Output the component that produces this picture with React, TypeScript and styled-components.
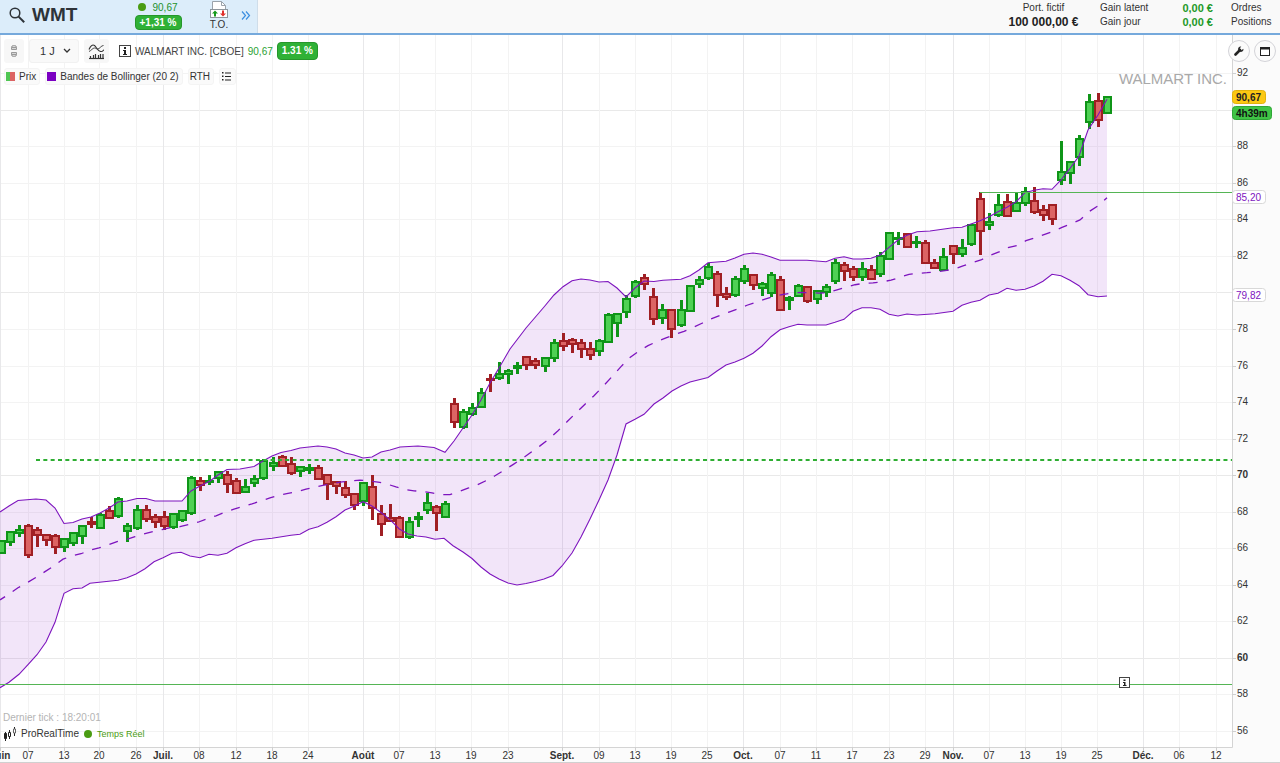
import React from "react";
import styled, { createGlobalStyle } from "styled-components";

const GlobalStyle = createGlobalStyle`
  * { box-sizing: border-box; }
  body {
    margin: 0;
    background: #fff;
    color: #333;
    font-family: "Liberation Sans", Arial, sans-serif;
    font-size: 10px;
  }
  button, select { font: inherit; color: inherit; }
`;

/* ---------- chart data ---------- */

const STEP = 9.067;
const PLOT_RIGHT = 1232;
const PLOT_BOTTOM = 747;

type Candle = ["g" | "r", number, number, number, number];

// direction, high, body top, body bottom, low
const candles: Candle[] = [
  ["g", 540, 540, 554, 554], ["g", 531, 531, 543, 546], ["g", 525, 529, 534, 537], ["r", 524, 525, 556, 558],
  ["r", 527, 529, 536, 547], ["r", 534, 534, 541, 546], ["r", 534, 535, 548, 554], ["g", 538, 538, 548, 552],
  ["g", 532, 532, 544, 546], ["g", 525, 525, 537, 544], ["r", 517, 521, 525, 528], ["g", 513, 514, 529, 529],
  ["r", 506, 510, 519, 519], ["g", 497, 498, 517, 518], ["g", 523, 525, 532, 542], ["g", 505, 509, 529, 530],
  ["r", 505, 509, 520, 522], ["r", 514, 516, 523, 528], ["r", 511, 516, 527, 530], ["g", 513, 513, 528, 529],
  ["g", 510, 510, 521, 522], ["g", 476, 477, 514, 515], ["r", 477, 480, 486, 491], ["g", 475, 480, 483, 485],
  ["g", 471, 471, 479, 483], ["r", 471, 474, 485, 493], ["r", 478, 480, 494, 494], ["g", 479, 486, 493, 493],
  ["g", 475, 478, 484, 487], ["g", 459, 460, 479, 480], ["g", 457, 462, 467, 471], ["r", 455, 456, 467, 467],
  ["r", 457, 463, 474, 475], ["g", 466, 466, 472, 477], ["g", 464, 467, 471, 474], ["r", 465, 467, 480, 480],
  ["r", 474, 474, 485, 500], ["r", 481, 481, 487, 494], ["r", 481, 487, 496, 498], ["r", 493, 493, 506, 510],
  ["g", 482, 482, 502, 506], ["r", 475, 486, 509, 520], ["r", 505, 513, 525, 536], ["r", 504, 517, 522, 522],
  ["r", 516, 517, 538, 538], ["g", 517, 521, 538, 539], ["g", 512, 516, 520, 527], ["g", 493, 502, 511, 514],
  ["r", 505, 506, 514, 531], ["g", 501, 503, 518, 518], ["r", 398, 403, 423, 428], ["g", 409, 411, 428, 429],
  ["g", 403, 407, 415, 416], ["g", 388, 392, 408, 408], ["r", 374, 378, 381, 392], ["g", 362, 373, 379, 380],
  ["g", 369, 370, 375, 384], ["g", 362, 365, 369, 374], ["r", 356, 356, 366, 370], ["r", 358, 360, 366, 369],
  ["g", 357, 357, 367, 372], ["g", 339, 342, 359, 362], ["r", 333, 340, 347, 351], ["r", 338, 339, 345, 353],
  ["r", 339, 342, 350, 358], ["r", 342, 348, 356, 360], ["g", 339, 340, 352, 356], ["g", 313, 314, 343, 343],
  ["g", 313, 313, 324, 337], ["g", 295, 298, 313, 318], ["g", 280, 281, 297, 298], ["r", 274, 277, 285, 290],
  ["r", 288, 296, 320, 325], ["g", 304, 309, 319, 324], ["r", 309, 309, 330, 338], ["g", 300, 309, 326, 327],
  ["g", 285, 285, 312, 312], ["g", 276, 279, 285, 288], ["g", 263, 266, 279, 280], ["r", 271, 273, 296, 307],
  ["r", 287, 293, 298, 300], ["g", 276, 278, 296, 297], ["g", 265, 268, 282, 284], ["r", 274, 274, 286, 290],
  ["g", 282, 283, 289, 296], ["g", 272, 274, 294, 297], ["r", 276, 279, 311, 311], ["g", 296, 297, 301, 310],
  ["g", 284, 285, 297, 297], ["r", 286, 286, 302, 303], ["g", 290, 290, 300, 304], ["g", 284, 286, 293, 297],
  ["g", 259, 262, 282, 284], ["r", 262, 264, 272, 281], ["r", 266, 268, 278, 281], ["g", 262, 268, 278, 281],
  ["r", 265, 269, 280, 280], ["g", 252, 255, 275, 277], ["g", 232, 232, 260, 260], ["g", 232, 237, 240, 245],
  ["r", 233, 233, 248, 248], ["g", 236, 241, 244, 248], ["r", 240, 242, 264, 264], ["r", 259, 262, 269, 269],
  ["g", 248, 256, 271, 271], ["r", 245, 245, 255, 264], ["g", 239, 247, 255, 257], ["g", 224, 224, 245, 246],
  ["r", 192, 198, 232, 255], ["g", 213, 221, 226, 230], ["g", 194, 204, 216, 217], ["r", 194, 201, 217, 217],
  ["g", 193, 202, 212, 212], ["g", 187, 191, 204, 206], ["r", 187, 200, 213, 214], ["r", 205, 209, 216, 221],
  ["r", 204, 204, 220, 225], ["g", 141, 171, 181, 185], ["g", 161, 161, 174, 184], ["g", 135, 138, 158, 166],
  ["g", 94, 101, 123, 129], ["r", 93, 100, 121, 127], ["g", 96, 96, 114, 114],
];

type Point = [number, number];

const upperBand: Point[] = [
  [0, 512], [9, 506], [18, 500.5], [36, 499], [46, 500], [55, 508], [64, 523.5], [73, 522.5], [82, 519], [91, 517],
  [100, 513], [109, 508], [118, 502], [127, 501], [137, 498.5], [146, 498.5], [155, 501], [182, 501], [191, 491],
  [200, 486], [210, 481], [218, 475], [227, 469.5], [240, 469], [254, 466.5], [263, 461], [272, 456], [281, 452.5],
  [291, 450.5], [300, 448], [318, 446], [327, 447], [336, 449], [345, 453], [354, 455], [363, 458], [372, 457],
  [381, 452], [390, 450], [400, 447], [418, 446], [434, 447.5], [445, 452.3], [454, 441], [463, 428], [472, 415],
  [481, 400], [490, 383], [499, 368], [510, 349], [526, 328], [544, 307], [554, 295], [563, 286.7], [572, 280.7],
  [581, 279], [590, 280], [599, 282], [608, 281.5], [617, 288], [626, 297], [635, 288], [644, 281], [654, 281.5],
  [663, 280.3], [681, 279.3], [690, 275.7], [699, 270], [708, 262.7], [726, 261.3], [735, 258], [744, 254.3],
  [753, 253], [762, 254.3], [771, 257], [780, 260.3], [807, 260.3], [826, 261.7], [835, 258.3], [844, 256.7],
  [853, 259], [862, 259], [871, 258.3], [880, 255], [889, 247.3], [898, 240], [907, 235.3], [917, 231.7], [930, 231],
  [953, 227.7], [962, 227.3], [971, 224], [980, 220.7], [989, 216.7], [998, 211.7], [1007, 207.3], [1016, 201.7],
  [1025, 192.7], [1034, 190.3], [1043, 188.7], [1052, 189.3], [1061, 180], [1070, 168.3], [1079, 156], [1088, 130],
  [1098, 115], [1107, 99.3],
];

const lowerBand: Point[] = [
  [0, 687.7], [9, 682.3], [19, 674.3], [28, 664.7], [37, 654.7], [46, 642], [55, 622.3], [64, 593.3], [73, 588.7],
  [82, 588], [90, 583.3], [118, 580.3], [127, 577.7], [136, 574], [145, 568.7], [154, 561.7], [163, 557.7],
  [172, 553.3], [181, 552.3], [190, 556], [200, 557.7], [209, 554.3], [218, 555.3], [227, 553.3], [236, 547.7],
  [245, 543.7], [254, 540.3], [272, 538.3], [291, 535.3], [300, 534.3], [309, 529.3], [318, 526.7], [327, 522.3],
  [336, 516.7], [345, 510], [354, 506.3], [363, 501.7], [372, 506], [382, 513.3], [391, 520.7], [399, 528.7],
  [408, 534], [417, 536], [426, 537], [435, 539.3], [444, 538.3], [453, 545.7], [463, 552], [472, 558.5], [481, 567],
  [490, 574], [499, 579], [508, 583], [517, 585], [526, 583.5], [535, 581.5], [544, 579], [553, 575.5], [562, 566],
  [572, 553], [581, 537], [590, 519], [599, 500], [608, 480], [617, 455], [626, 424], [635, 419.3], [644, 414.3],
  [654, 404], [663, 398], [672, 391], [681, 386], [690, 382], [708, 377.5], [717, 371], [726, 365], [735, 362],
  [744, 358.3], [753, 353.3], [762, 346], [771, 336.7], [780, 329.7], [789, 326.7], [798, 324.3], [807, 325],
  [826, 325], [835, 322.3], [844, 319.3], [853, 311.3], [862, 307.7], [871, 307.7], [880, 309.3], [889, 314.3],
  [898, 316], [907, 314], [917, 315], [935, 313.7], [953, 311.3], [962, 305.3], [971, 302.3], [980, 300.3],
  [989, 295], [998, 293.3], [1007, 288.3], [1016, 290.3], [1025, 289.3], [1034, 286], [1043, 281.3], [1052, 274.3],
  [1061, 275.7], [1070, 280.3], [1079, 285.7], [1088, 294.7], [1098, 296.7], [1107, 296],
];

const valueAt = (line: Point[], x: number) => {
  const next = Math.max(1, line.findIndex((p) => p[0] >= x));
  const [x0, y0] = line[next - 1];
  const [x1, y1] = line[next];
  return y0 + ((y1 - y0) * (x - x0)) / (x1 - x0);
};

// the moving average runs halfway between the two bands
const average: Point[] = Array.from({ length: 124 }, (_, i) => {
  const x = i * 9;
  return [x, (valueAt(upperBand, x) + valueAt(lowerBand, x)) / 2] as Point;
}).filter((p) => p[0] <= 1107);

const toPoints = (line: Point[]) => line.map((p) => p.join(",")).join(" ");

const prices = Array.from({ length: 19 }, (_, i) => ({
  value: 92 - i * 2,
  y: Math.round(73.2 + i * 36.54),
}));

const dates: [string, number][] = [
  ["Juin", 0], ["07", 28], ["13", 64], ["20", 99], ["26", 136], ["Juil.", 163], ["08", 199], ["12", 236],
  ["18", 272], ["24", 308], ["Août", 363], ["07", 399], ["13", 435], ["19", 471], ["23", 508], ["Sept.", 562],
  ["09", 599], ["13", 635], ["19", 671], ["25", 707], ["Oct.", 743], ["07", 780], ["11", 816], ["17", 852],
  ["23", 889], ["29", 925], ["Nov.", 953], ["07", 989], ["13", 1025], ["19", 1061], ["25", 1097], ["Déc.", 1143],
  ["06", 1179], ["12", 1216],
];

const isMonth = (label: string) => /[A-Z]/.test(label);

/* ---------- header ---------- */

const Header = styled.header`
  display: flex;
  justify-content: space-between;
  height: 35px;
  background: #f9f9f9;
  border-bottom: 2px solid #75a9dc;
`;

const SymbolPanel = styled.div`
  display: flex;
  align-items: center;
  width: 258px;
  padding: 0 0 3px 8px;
  background: #dcedfa;
  border-right: 1px solid #cfdde9;
`;

const SymbolButton = styled.button`
  display: flex;
  align-items: center;
  gap: 6px;
  width: 127px;
  padding: 0;
  border: 0;
  background: none;
  color: #2d3338;
  font-size: 19px;
  font-weight: bold;
  line-height: 24px;
`;

const Quote = styled.div`
  display: flex;
  flex-direction: column;
  align-items: center;
  gap: 1px;
  width: 46px;
`;

const QuoteValue = styled.span`
  display: flex;
  align-items: center;
  gap: 6px;
  color: #23912b;
  line-height: 13px;
`;

const Dot = styled.i`
  width: 8px;
  height: 8px;
  border-radius: 50%;
  background: #4a9c12;
`;

const Badge = styled.span<{ $tall?: boolean }>`
  padding: 0 4px;
  border: 1px solid #26962b;
  border-radius: 4px;
  background: #2fb136;
  color: #fff;
  font-weight: bold;
  line-height: ${(p) => (p.$tall ? 16 : 13)}px;
  white-space: nowrap;
`;

const OrderButton = styled.button`
  display: flex;
  flex-direction: column;
  align-items: center;
  width: 20px;
  margin-left: 28px;
  padding: 0;
  border: 0;
  background: none;
  line-height: 11px;
`;

const MoreButton = styled.button`
  display: flex;
  margin-left: 12px;
  padding: 0;
  border: 0;
  background: none;
`;

const Account = styled.div`
  display: flex;
  padding: 0 8px 4px 0;
`;

const AccountColumn = styled.div<{ $width: number; $align?: string }>`
  display: flex;
  flex-direction: column;
  align-items: ${(p) => p.$align ?? "flex-start"};
  justify-content: center;
  width: ${(p) => p.$width}px;
  line-height: 14px;
  white-space: nowrap;
`;

const Balance = styled.strong`
  color: #222;
  font-size: 12px;
`;

const Gain = styled.strong`
  color: #1f9a28;
  font-size: 11px;
`;

const AccountLink = styled.a`
  color: inherit;
  text-decoration: none;
`;

/* ---------- chart panel ---------- */

const ChartPanel = styled.main`
  position: relative;
`;

const ChartSvg = styled.svg`
  display: block;
  width: 100%;
  height: auto;
  fill: #333;
`;

const TopTools = styled.div`
  position: absolute;
  top: 4px;
  left: 4px;
  display: flex;
  flex-direction: column;
  gap: 5px;
`;

const ToolRow = styled.div`
  display: flex;
  align-items: center;
  gap: 5px;
`;

const Tool = styled.button`
  display: flex;
  align-items: center;
  justify-content: center;
  width: 20px;
  height: 24px;
  padding: 0;
  border: 0;
  border-radius: 3px;
  background: #f7f7f7;
`;

const WideTool = styled(Tool)`
  width: 25px;
`;

const PeriodBox = styled.label`
  display: flex;
  align-items: center;
  width: 50px;
  height: 24px;
  padding-left: 10px;
  border: 1px solid #f1f1f1;
  border-radius: 3px;
  background: #f9f9f9;
`;

const PeriodSelect = styled.select`
  width: 23px;
  padding: 0;
  border: 0;
  outline: 0;
  background: none;
  appearance: none;
  font-size: 11px;
`;

const Title = styled.div`
  display: flex;
  align-items: center;
  gap: 4px;
  margin-left: 5px;
  color: #444;
  white-space: nowrap;
`;

const TitlePrice = styled.span`
  color: #2aa132;
`;

const ChipRow = styled(ToolRow)``;

const Chip = styled.button`
  display: flex;
  align-items: center;
  gap: 4px;
  height: 17px;
  padding: 0 3px 0 1px;
  border: 1px solid #f4f4f4;
  border-radius: 3px;
  background: #fafafa;
  color: #333;
  white-space: nowrap;
`;

const Swatch = styled.i<{ $fill: string }>`
  width: 9px;
  height: 9px;
  background: ${(p) => p.$fill};
`;

const CornerTools = styled.div`
  position: absolute;
  top: 5px;
  right: 4px;
  display: flex;
  gap: 4px;
`;

const RoundButton = styled.button`
  display: flex;
  align-items: center;
  justify-content: center;
  width: 22px;
  height: 22px;
  padding: 0;
  border: 1px solid #d3d3d8;
  border-radius: 50%;
  background: #fbfbfb;
`;

const Status = styled.footer`
  position: absolute;
  bottom: 22px;
  left: 3px;
  display: flex;
  flex-direction: column;
  gap: 2px;
`;

const LastTick = styled.span`
  color: #b4b4b4;
  line-height: 14px;
`;

const Provider = styled.div`
  display: flex;
  align-items: center;
  gap: 4px;
  line-height: 14px;
`;

const Live = styled.span`
  display: flex;
  align-items: center;
  gap: 5px;
  padding-left: 1px;
  color: #4a9c12;
  font-size: 9px;
`;

/* ---------- icons ---------- */

const SearchIcon = () => (
  <svg width="18" height="18" viewBox="0 0 18 18" fill="none" stroke="#2d3338">
    <circle cx="7" cy="7" r="4.8" strokeWidth="1.5" />
    <path d="M10.6 10.6 16.2 16.2" strokeWidth="2" />
  </svg>
);

const TicketIcon = () => (
  <svg width="20" height="19" viewBox="0 0 20 19">
    <path d="M3.5 9V1.5h9l4 4V9" fill="#fff" stroke="#9aa3ab" />
    <path d="M12.5 1.5v4h4" fill="none" stroke="#9aa3ab" />
    <rect x="1.5" y="9.5" width="17" height="8" fill="#fff" stroke="#8d969d" />
    <path d="M6 10.500 9 13.500H7v3H5v-3H3z" fill="#149a1b" />
    <path d="M14 16.500 11 13.500h2v-3h2v3h2z" fill="#e0302c" />
  </svg>
);

const InfoIcon = () => (
  <svg width="12" height="12" viewBox="0 0 12 12">
    <rect x="0.5" y="0.5" width="11" height="11" fill="#fff" stroke="#444" />
    <path d="M5 2h2v2H5zM4 5h3v4h1v1H4V9h1V6H4z" fill="#222" />
  </svg>
);

const IndicatorIcon = () => (
  <svg width="17" height="17" viewBox="0 0 17 17" fill="none" stroke="#333">
    <path d="M1 6.500C2.500 3 4.500 1 6.500 2.500S9.500 8 12.500 8.500s2-1.500 3.500-1.500" strokeWidth="1.1" />
    <path d="M1 8.500c2.500-1 3.500-3.500 5.500-3.500S9 7 11 5.500 13 3 15.500 2.500" strokeWidth="0.9" />
    <path d="M1 15.500h15" strokeWidth="1.2" />
    <path d="M2.500 15v-2M5.500 15v-3M7.500 15v-4M10.500 15v-3M12.500 15v-4M15 15v-4" strokeWidth="1.2" />
  </svg>
);

const LinkIcon = () => (
  <svg width="8" height="14" viewBox="0 0 8 14" fill="#d6d6d6" stroke="#999">
    <path d="M1.500 5.500V3.500a2 2 0 0 1 2-2h1a2 2 0 0 1 2 2v2zM1.500 3.500h5" />
    <path d="M1.500 8.500v2a2 2 0 0 0 2 2h1a2 2 0 0 0 2-2v-2zM1.500 10.500h5" />
  </svg>
);

const CandlesIcon = () => (
  <svg width="14" height="14" viewBox="0 0 14 14" stroke="#222" fill="#222">
    <path d="M2.500 5v9M6.500 3v9M11.500 0v9" />
    <path d="M1.500 6.500h2v5h-2z" />
    <path d="M5.500 5.500h2v4h-2z" fill="#fff" />
    <path d="M10.500 2h2v4h-2z" fill="#fff" stroke="#666" />
  </svg>
);

/* ---------- chart drawing ---------- */

const CandleShape = ({ index, data }: { index: number; data: Candle }) => {
  const [kind, high, top, bottom, low] = data;
  const x = Math.round(0.5 + index * STEP);
  const edge = kind === "g" ? "#0f9518" : "#a01f24";
  const core = kind === "g" ? "#4fd154" : "#dc6464";
  return (
    <g shapeRendering="crispEdges">
      <rect x={x - 1} y={high} width={3} height={low - high} fill={edge} />
      <rect x={x - 4} y={top} width={9} height={bottom - top} fill={edge} />
      {bottom - top > 4 && <rect x={x - 2} y={top + 2} width={5} height={bottom - top - 4} fill={core} />}
    </g>
  );
};

type TagProps = { y: number; width: number; text: string; fill: string; stroke: string; color: string; bold?: boolean };

const PriceTag = ({ y, width, text, fill, stroke, color, bold }: TagProps) => (
  <g>
    <rect x="1232.5" y={y - 6.5} width={width} height="13" rx="3" fill={fill} stroke={stroke} />
    <text x="1236" y={y + 4} fill={color} fontSize="10" fontWeight={bold ? "bold" : "normal"}>
      {text}
    </text>
  </g>
);

const Chart = () => (
  <ChartSvg viewBox="0 35 1280 728" role="img" aria-label="WALMART INC. - Prix et Bandes de Bollinger">
    <rect x="0" y="35" width="1280" height="728" fill="#fbfbfb" />
    <rect x="0" y="35" width={PLOT_RIGHT} height={PLOT_BOTTOM - 35} fill="#fff" />

    <g shapeRendering="crispEdges">
      {prices.map(({ value, y }) => (
        <rect key={value} x="0" y={y} width={PLOT_RIGHT} height="1" fill={value % 10 ? "#f3f3f3" : "#e9e9e9"} />
      ))}
      {dates.map(([label, x]) => (
        <rect key={x} x={x} y="35" width="1" height={PLOT_BOTTOM - 35} fill={isMonth(label) ? "#e8e8ea" : "#f3f3f3"} />
      ))}
    </g>

    <text x="1227" y="84" textAnchor="end" fontSize="15" fill="#a9a9a9">
      WALMART INC.
    </text>

    <polygon points={`${toPoints(upperBand)} ${toPoints([...lowerBand].reverse())}`} fill="#7b00c2" fillOpacity="0.1" />

    {candles.map((data, i) => (
      <CandleShape key={i} index={i} data={data} />
    ))}

    <g fill="none" stroke="#7d14be" strokeWidth="1.1">
      <polyline points={toPoints(upperBand)} />
      <polyline points={toPoints(lowerBand)} />
      <polyline points={toPoints(average)} strokeWidth="1.3" strokeDasharray="9 9.12" strokeDashoffset="3" />
    </g>

    <path d="M980 192.5H1232M0 684.5H1232" stroke="#55b555" />
    <path d="M36 460H1232" stroke="#2fae33" strokeWidth="2" strokeDasharray="4 3.33" />

    <g transform="translate(1119.5 677.5)">
      <rect width="10" height="10" fill="#fff" stroke="#444" />
      <path d="M4 2h2v1.500H4zM3.500 4.500H6v3h1v1H3.500v-1h1v-2h-1z" fill="#222" />
    </g>

    <path d="M0 747.5H1232.5V35" fill="none" stroke="#d4d4d4" />
    <path d="M0 762.5H1280" stroke="#d0d0d0" />

    {prices.map(({ value, y }) =>
      value === 90 || value === 80 ? null : (
        <g key={value}>
          <path d={`M1232 ${y + 0.5}h4`} stroke="#cfcfcf" />
          <text x="1237" y={y + 3} fontSize="10" fontWeight={value % 10 ? "normal" : "bold"}>
            {value}
          </text>
        </g>
      ),
    )}
    {dates.map(([label, x]) => (
      <g key={x}>
        <path d={`M${x + 0.5} 747v4`} stroke="#cfcfcf" />
        <text x={x} y="759" textAnchor="middle" fontSize="10" fontWeight={isMonth(label) ? "bold" : "normal"}>
          {label}
        </text>
      </g>
    ))}

    <PriceTag y={97} width={33} text="90,67" fill="#fcc812" stroke="#e2b20c" color="#222" bold />
    <PriceTag y={113} width={39} text="4h39m" fill="#3fc446" stroke="#2fa636" color="#111" bold />
    <PriceTag y={197} width={33} text="85,20" fill="#fff" stroke="#d8d8d8" color="#7d14be" />
    <PriceTag y={295} width={33} text="79,82" fill="#fff" stroke="#d8d8d8" color="#7d14be" />
  </ChartSvg>
);

export default function App() {
  return (
    <>
      <GlobalStyle />
      <Header>
        <SymbolPanel>
          <SymbolButton>
            <SearchIcon />
            WMT
          </SymbolButton>
          <Quote>
            <QuoteValue>
              <Dot />
              90,67
            </QuoteValue>
            <Badge>+1,31 %</Badge>
          </Quote>
          <OrderButton>
            <TicketIcon />
            T.O.
          </OrderButton>
          <MoreButton aria-label="Plus">
            <svg width="10" height="9" viewBox="0 0 10 9" fill="none" stroke="#3d8fe0">
              <path d="M1 0.500 4.500 4.500 1 8.500M5 0.500 8.500 4.500 5 8.500" strokeWidth="1.2" />
            </svg>
          </MoreButton>
        </SymbolPanel>
        <Account>
          <AccountColumn $width={73} $align="center">
            <span>Port. fictif</span>
            <Balance>100 000,00 €</Balance>
          </AccountColumn>
          <AccountColumn $width={20} />
          <AccountColumn $width={60}>
            <span>Gain latent</span>
            <span>Gain jour</span>
          </AccountColumn>
          <AccountColumn $width={53} $align="flex-end">
            <Gain>0,00 €</Gain>
            <Gain>0,00 €</Gain>
          </AccountColumn>
          <AccountColumn $width={18} />
          <AccountColumn $width={41}>
            <AccountLink href="#ordres">Ordres</AccountLink>
            <AccountLink href="#positions">Positions</AccountLink>
          </AccountColumn>
        </Account>
      </Header>

      <ChartPanel>
        <Chart />

        <TopTools>
          <ToolRow>
            <Tool aria-label="Lier">
              <LinkIcon />
            </Tool>
            <PeriodBox>
              <PeriodSelect aria-label="Unité de temps" defaultValue="1 J">
                <option>1 J</option>
              </PeriodSelect>
              <svg width="8" height="6" viewBox="0 0 8 6" fill="none" stroke="#333">
                <path d="M1 1l3 3 3-3" strokeWidth="1.3" />
              </svg>
            </PeriodBox>
            <WideTool aria-label="Indicateurs">
              <IndicatorIcon />
            </WideTool>
            <Title>
              <InfoIcon />
              <span>WALMART INC. [CBOE]</span>
              <TitlePrice>90,67</TitlePrice>
              <Badge $tall>1.31 %</Badge>
            </Title>
          </ToolRow>
          <ChipRow>
            <Chip>
              <Swatch $fill="linear-gradient(90deg, #4fc653 50%, #dc6464 50%)" />
              Prix
            </Chip>
            <Chip>
              <Swatch $fill="#7b00c2" />
              Bandes de Bollinger (20 2)
            </Chip>
            <Chip>RTH</Chip>
            <Chip aria-label="Liste">
              <svg width="11" height="9" viewBox="0 0 11 9" fill="#222">
                <path d="M1 0h1.500v1.500H1zM1 3.500h1.500V5H1zM1 7h1.500v1.500H1zM4 0.500h6v1H4zM4 4h6v1H4zM4 7.500h6v1H4z" />
              </svg>
            </Chip>
          </ChipRow>
        </TopTools>

        <CornerTools>
          <RoundButton aria-label="Réglages">
            <svg width="10" height="10" viewBox="0 0 10 10" fill="none" stroke="#222">
              <path d="M1.500 8.500 6 4" strokeWidth="2.6" strokeLinecap="round" />
              <path d="M6.500 0.800a2.400 2.400 0 1 0 2.700 2.700L7.500 4.500 5.600 3.500 5.500 2z" fill="#222" strokeWidth="0.8" />
            </svg>
          </RoundButton>
          <RoundButton aria-label="Agrandir">
            <svg width="10" height="9" viewBox="0 0 10 9">
              <rect x="0.5" y="0.5" width="9" height="8" fill="#fff" stroke="#222" />
              <rect width="10" height="2.5" fill="#222" />
            </svg>
          </RoundButton>
        </CornerTools>

        <Status>
          <LastTick>Dernier tick : 18:20:01</LastTick>
          <Provider>
            <CandlesIcon />
            ProRealTime
            <Live>
              <Dot />
              Temps Réel
            </Live>
          </Provider>
        </Status>
      </ChartPanel>
    </>
  );
}
